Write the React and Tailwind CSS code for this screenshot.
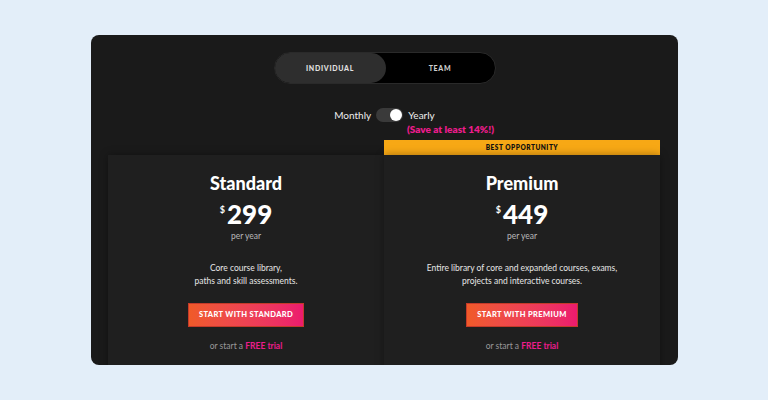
import React from 'react'

const font = { fontFamily: 'Lato, "Open Sans", sans-serif' }

function PlanCard({ name, price, lines, cta, banner }) {
  return (
    <div className="flex w-[276px] shrink-0 flex-col">
      {banner ? (
        <div className="flex h-[15px] shrink-0 items-center justify-center bg-[#f7a815] text-[6.5px] font-extrabold tracking-[0.08em] text-[#111]">
          {banner}
        </div>
      ) : (
        <div className="h-[15px] shrink-0" />
      )}
      <div className="flex h-[240px] shrink-0 flex-col items-center bg-[#1f1f1f] pt-[17px] shadow-[0_0_8px_rgba(0,0,0,0.35)]">
        <h2 className="text-[18px] font-black leading-[22px] text-white">{name}</h2>
        <div className="mt-[6px] flex items-start text-white">
          <span className="mt-[3px] mr-[2px] text-[9px] font-bold">$</span>
          <span className="text-[26px] font-black leading-[28px]">{price}</span>
        </div>
        <p className="mt-[2px] text-[8.5px] text-[#b8b8b8]">per year</p>
        <div className="mt-[19px] text-center text-[8.5px] leading-[13px] text-[#e6e6e6]">
          {lines.map((l) => (
            <p key={l}>{l}</p>
          ))}
        </div>
        <button
          type="button"
          className="mt-[15px] h-[24px] border border-[#c43a2a] bg-gradient-to-r from-[#f05a28] to-[#ec1a6e] px-[10px] text-[7.5px] font-black tracking-[0.05em] text-white"
        >
          {cta}
        </button>
        <p className="mt-[13px] text-[8.5px] text-[#9a9a9a]">
          or start a <span className="font-bold text-[#ec1c8c]">FREE trial</span>
        </p>
      </div>
    </div>
  )
}

export default function App() {
  return (
    <div className="h-[400px] w-full bg-[#e3eef9] pl-[91px] pt-[35px]" style={font}>
      <div className="flex h-[330px] w-[587px] flex-col items-center overflow-hidden rounded-lg bg-[#1a1a1a]">
        <div className="mt-[17px] flex h-[32px] w-[222px] shrink-0 rounded-full border border-[#2a2a2a] bg-black">
          <div className="flex w-[111px] items-center justify-center rounded-full bg-[#2e2e2e] text-[7px] font-black tracking-[0.1em] text-[#e0e0e0]">
            INDIVIDUAL
          </div>
          <div className="flex flex-1 items-center justify-center text-[7px] font-black tracking-[0.1em] text-[#cfcfcf]">
            TEAM
          </div>
        </div>

        <div className="mt-[23px] flex h-[16px] shrink-0 items-center gap-[5px] text-[10px] text-[#eeeeee]">
          <span>Monthly</span>
          <span className="flex h-[14px] w-[27px] items-center justify-end rounded-full bg-[#3a3a3a] px-[1px]">
            <span className="h-[12px] w-[12px] rounded-full bg-white" />
          </span>
          <span>Yearly</span>
        </div>
        <div className="w-full shrink-0 pl-[316px] text-[10px] font-extrabold leading-[13px] text-[#ec1c8c]">
          (Save at least 14%!)
        </div>

        <div className="mt-[4px] flex w-full shrink-0 px-[17px]">
          <PlanCard
            name="Standard"
            price="299"
            lines={['Core course library,', 'paths and skill assessments.']}
            cta="START WITH STANDARD"
          />
          <PlanCard
            name="Premium"
            price="449"
            lines={['Entire library of core and expanded courses, exams,', 'projects and interactive courses.']}
            cta="START WITH PREMIUM"
            banner="BEST OPPORTUNITY"
          />
        </div>
      </div>
    </div>
  )
}
